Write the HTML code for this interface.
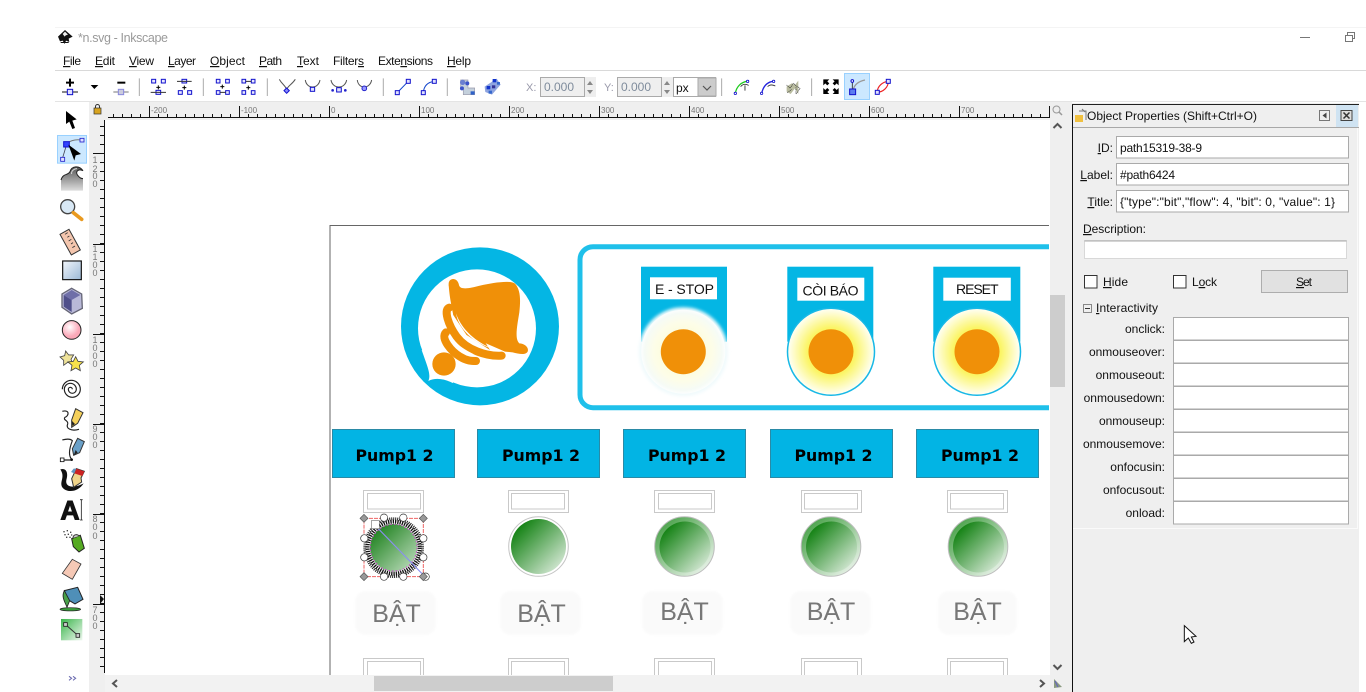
<!DOCTYPE html>
<html><head><meta charset="utf-8"><title>*n.svg - Inkscape</title>
<style>
html,body{margin:0;padding:0;background:#fff;width:1366px;height:692px;overflow:hidden}
svg{display:block;font-family:"Liberation Sans",sans-serif}
.t{font-size:12px;fill:#111}
.u{text-decoration:underline}
.rl{font-size:8px;fill:#777}
.rv{font-size:9px;fill:#777;text-anchor:middle}
.lab{font-size:12px;fill:#111;text-anchor:end}
.bat{font-size:25px;fill:#777;text-anchor:middle}
.pump{font-family:"DejaVu Sans",sans-serif;font-weight:bold;font-size:15.8px;fill:#000;text-anchor:middle}
.sq{fill:#dfe0ff;stroke:#11c;stroke-width:3}
.in{fill:#fff;stroke:#aaa;stroke-width:1}
</style></head><body>
<svg width="1366" height="692" viewBox="0 0 1366 692" xmlns="http://www.w3.org/2000/svg">
<defs>
<linearGradient id="gl" x1="0.1" y1="0.1" x2="0.9" y2="0.9"><stop offset="0" stop-color="#0a7d0a"/><stop offset="1" stop-color="#d5e8d5"/></linearGradient>
<linearGradient id="gr" x1="0.15" y1="0.1" x2="0.85" y2="0.9"><stop offset="0" stop-color="#4da34d"/><stop offset="1" stop-color="#e6f1e6"/></linearGradient>
<linearGradient id="gs" x1="0.1" y1="0.1" x2="0.9" y2="0.9"><stop offset="0" stop-color="#1c801c"/><stop offset="1" stop-color="#b5d8b5"/></linearGradient>
<radialGradient id="ye"><stop offset="0" stop-color="#f7ef30"/><stop offset=".55" stop-color="#fbf566"/><stop offset="1" stop-color="#fffff8"/></radialGradient>
<radialGradient id="es"><stop offset="0" stop-color="#fbfbc8"/><stop offset=".7" stop-color="#fdfde8"/><stop offset=".92" stop-color="#f6fbf6"/><stop offset="1" stop-color="#fcfefe"/></radialGradient>
<linearGradient id="wv" x1="0" y1="0" x2="0" y2="1"><stop offset="0" stop-color="#555"/><stop offset="1" stop-color="#ddd"/></linearGradient>
<linearGradient id="rc" x1="0" y1="0" x2="1" y2="1"><stop offset="0" stop-color="#f2f6fb"/><stop offset="1" stop-color="#9ab8d6"/></linearGradient>
<linearGradient id="gd" x1="0" y1="0" x2="1" y2="1"><stop offset="0" stop-color="#39b54a"/><stop offset="1" stop-color="#eef8ef"/></linearGradient>
<radialGradient id="ci" cx=".4" cy=".35"><stop offset="0" stop-color="#fff"/><stop offset="1" stop-color="#fba8b8"/></radialGradient>
<clipPath id="cv"><rect x="105" y="120" width="944" height="555"/></clipPath>
<clipPath id="hr"><rect x="108" y="102" width="942" height="18"/></clipPath>
<filter id="gb" x="-20%" y="-20%" width="140%" height="140%"><feGaussianBlur stdDeviation="1.5"/></filter>
<filter id="gb2" x="-20%" y="-20%" width="140%" height="140%"><feGaussianBlur stdDeviation="1"/></filter>
</defs>

<!-- window chrome -->
<rect x="55" y="27" width="1311" height="1" fill="#f4f4f4"/>
<g transform="translate(50,20) scale(.3333)">
<path d="M24,50 L45,30 L68,50 L56,56 L58,66 L48,62 L44,72 L38,62 L30,64 Z" fill="#111"/>
<path d="M38,42 L45,35 L54,44 L47,46 L44,50 Z" fill="#eee"/>
<rect x="32" y="66" width="24" height="3" fill="#111"/>
</g>
<text x="78" y="42" font-size="12.5" fill="#9a9a9a" textLength="90">*n.svg - Inkscape</text>
<rect x="1300" y="37" width="10" height="1" fill="#777"/>
<path d="M1345.500,35.500h7v6h-7zM1347.500,35v-2.500h7v6h-2" fill="none" stroke="#777"/>

<!-- menu -->
<g class="t">
<text class="t" x="63" y="65" textLength="18"><tspan class="u">F</tspan>ile</text>
<text class="t" x="95" y="65" textLength="20"><tspan class="u">E</tspan>dit</text>
<text class="t" x="129" y="65" textLength="25"><tspan class="u">V</tspan>iew</text>
<text class="t" x="168" y="65" textLength="28"><tspan class="u">L</tspan>ayer</text>
<text class="t" x="210" y="65" textLength="35"><tspan class="u">O</tspan>bject</text>
<text class="t" x="259" y="65" textLength="23"><tspan class="u">P</tspan>ath</text>
<text class="t" x="297" y="65" textLength="22"><tspan class="u">T</tspan>ext</text>
<text class="t" x="333" y="65" textLength="31">Filter<tspan class="u">s</tspan></text>
<text class="t" x="378" y="65" textLength="55">Exte<tspan class="u">n</tspan>sions</text>
<text class="t" x="447" y="65" textLength="24"><tspan class="u">H</tspan>elp</text>
</g>
<rect x="55" y="70" width="1311" height="1" fill="#d9d9d9"/>
<rect x="55" y="101" width="1311" height="1" fill="#e4e4e4"/>

<!-- toolbar part 1 -->
<g transform="translate(50,20) scale(.3333)" fill="none">
<path d="M60,176V200M48,188H72" stroke="#000" stroke-width="6"/>
<path d="M36,216H84" stroke="#111" stroke-width="3"/><rect class="sq" x="52" y="208" width="16" height="16"/>
<path d="M122,195H145L133,207Z" fill="#000"/>
<path d="M202,188H226" stroke="#000" stroke-width="6"/><path d="M190,216H236" stroke="#777" stroke-width="3"/>
<rect x="205" y="208" width="16" height="16" fill="#ccd" stroke="#88d" stroke-width="3"/>
<path d="M268,175V228M460,175V228M652,175V228M1000,175V228M1192,175V228" stroke="#aaa" stroke-width="3"/>
<g stroke="#11c" stroke-width="3" fill="#e8e8ff">
<rect x="305" y="178" width="12" height="11"/><rect x="334" y="178" width="12" height="11"/><rect x="318" y="211" width="14" height="12"/>
<rect x="396" y="178" width="14" height="11"/><rect x="385" y="212" width="12" height="11"/><rect x="413" y="212" width="12" height="11"/>
<rect x="499" y="178" width="11" height="11"/><rect x="527" y="178" width="11" height="11"/><rect x="499" y="212" width="11" height="11"/><rect x="527" y="212" width="11" height="11"/>
<rect x="576" y="178" width="11" height="11"/><rect x="604" y="178" width="11" height="11"/><rect x="576" y="212" width="11" height="11"/><rect x="604" y="212" width="11" height="11"/>
</g>
<path d="M302,217H348M381,184H425M510,217H527M587,184H604" stroke="#333" stroke-width="3"/>
<path d="M325,196V208M319,202H331M403,197V209M397,203H409M517,194V206M511,200H523M595,197V209M589,203H601" stroke="#000" stroke-width="3"/>
<path d="M688,178C698,195 708,198 710,210C712,198 725,195 736,178M766,180C770,208 805,208 810,180M843,180C848,208 885,208 890,180M922,180C925,208 960,208 965,180" stroke="#555" stroke-width="3"/>
<path d="M710,204L718,212L710,220L702,212Z" fill="#88f" stroke="#11c" stroke-width="3"/>
<rect class="sq" x="781" y="202" width="13" height="12"/>
<rect class="sq" x="860" y="203" width="14" height="13"/>
<circle cx="848" cy="211" r="4" fill="#22c"/><circle cx="886" cy="211" r="4" fill="#22c"/>
<circle cx="943" cy="205" r="7" fill="#99f" stroke="#22c" stroke-width="3"/>
<path d="M1042,218L1075,184M1120,218C1122,195 1135,186 1153,184" stroke="#14c" stroke-width="3"/>
<rect class="sq" x="1036" y="212" width="12" height="12"/><rect class="sq" x="1069" y="178" width="12" height="12"/>
<rect class="sq" x="1114" y="212" width="12" height="12"/><rect class="sq" x="1147" y="178" width="12" height="12"/>
<path d="M1232,180H1254V204H1274V224H1240V204H1232Z" fill="#c4d0dc" stroke="#99a" stroke-width="2"/>
<circle cx="1238" cy="187" r="8" fill="#6a7fd0"/><circle cx="1252" cy="190" r="6" fill="#3a52c8"/><circle cx="1236" cy="205" r="6" fill="#3a52c8"/><rect x="1262" y="214" width="12" height="10" fill="#2f62c8"/>
<path d="M1304,200L1340,176L1352,194L1326,224L1306,216Z" fill="#8fa5e0"/>
<rect x="1328" y="177" width="11" height="10" fill="#13c"/><rect x="1310" y="198" width="11" height="10" fill="#13c"/><rect x="1326" y="196" width="10" height="9" fill="#339"/><rect x="1316" y="212" width="10" height="9" fill="#36c"/><rect x="1341" y="186" width="9" height="8" fill="#36c"/>
</g>

<!-- toolbar part 2 -->
<text x="526" y="91" font-size="11" fill="#99a">X:</text>
<rect x="540.500" y="77.500" width="44" height="19" fill="#efefef" stroke="#aaa" stroke-width="1"/>
<text x="544" y="91" font-size="12" fill="#7f8c9c" textLength="30">0.000</text>
<rect x="585" y="77" width="11" height="20" fill="#eee"/><path d="M587,85l3,-4 3,4zM587,90l3,4 3,-4z" fill="#888"/>
<text x="604" y="91" font-size="11" fill="#99a">Y:</text>
<rect x="617.500" y="77.500" width="44" height="19" fill="#efefef" stroke="#aaa" stroke-width="1"/>
<text x="621" y="91" font-size="12" fill="#7f8c9c" textLength="30">0.000</text>
<rect x="662" y="77" width="11" height="20" fill="#eee"/><path d="M664,85l3,-4 3,4zM664,90l3,4 3,-4z" fill="#888"/>
<rect x="673.500" y="77.500" width="42" height="19" fill="#fff" stroke="#aaa"/>
<rect x="698" y="78" width="18" height="18" fill="#ccc" stroke="#aaa"/>
<path d="M703,86l4,4 4,-4" fill="none" stroke="#555" stroke-width="1.200"/>
<text x="676" y="92" font-size="12" fill="#111">px</text>
<rect x="844.500" y="73.500" width="25" height="26" fill="#cce8ff" stroke="#99d1ff"/>
<g transform="translate(500,20) scale(.3333)" fill="none">
<path d="M665,175V228M935,175V228" stroke="#aaa" stroke-width="3"/>
<path d="M706,220C710,198 725,186 742,184" stroke="#2c2" stroke-width="4"/>
<path d="M722,200C730,190 738,192 746,196M735,196V212" stroke="#222" stroke-width="2.500"/>
<circle cx="706" cy="220" r="3.500" fill="#fff" stroke="#11c" stroke-width="2.500"/><circle cx="743" cy="184" r="3.500" fill="#fff" stroke="#11c" stroke-width="2.500"/>
<path d="M785,220C790,198 803,186 820,184" stroke="#22d" stroke-width="4"/>
<path d="M803,200C810,192 818,194 826,198" stroke="#222" stroke-width="2.500"/>
<circle cx="785" cy="220" r="3.500" fill="#fff" stroke="#11c" stroke-width="2.500"/><circle cx="821" cy="184" r="3.500" fill="#fff" stroke="#11c" stroke-width="2.500"/>
<path d="M860,200L875,190L885,195L895,182V222L885,205L872,222L860,215Z" fill="#b9bc9f"/>
<path d="M860,195L870,205L880,190L892,200L900,205L888,222V200M862,218L875,208" stroke="#222" stroke-width="2" stroke-dasharray="3 2"/>
<path d="M970,178H988L982,184L988,190L982,196L976,190L970,196ZM1016,178V196L1010,190L1004,196L998,190L1004,184L998,178ZM970,222V204L976,210L982,204L988,210L982,216L988,222ZM1016,222H998L1004,216L998,210L1004,204L1010,210L1016,204Z" fill="#000"/>
<path d="M1060,210C1062,195 1075,184 1095,180" stroke="#999" stroke-width="4"/>
<path d="M1057,186V208" stroke="#222" stroke-width="2.500"/>
<circle cx="1057" cy="183" r="4" fill="#fff" stroke="#11c" stroke-width="3"/>
<rect x="1049" y="207" width="18" height="17" fill="#5b7cf0" stroke="#11c" stroke-width="3"/>
<path d="M1132,217C1132,198 1148,186 1165,184M1132,217C1150,216 1165,202 1165,184" stroke="#e22" stroke-width="3.500"/>
<rect class="sq" x="1126" y="211" width="12" height="12"/><rect class="sq" x="1159" y="178" width="12" height="12"/>
</g>

<!-- ruler backgrounds -->
<rect x="89" y="102" width="961" height="18" fill="#efefef"/>
<rect x="89" y="102" width="16" height="590" fill="#efefef"/>
<rect x="105" y="675" width="945" height="17" fill="#f2f2f2"/>
<rect x="1050" y="102" width="22" height="590" fill="#efefef"/>

<!-- canvas -->
<rect x="105" y="120" width="945" height="555" fill="#fff"/>

<!-- H ruler -->
<g clip-path="url(#hr)">
<rect x="108" y="117" width="942" height="1" fill="#111"/>
<line x1="104" x2="1050" y1="115.500" y2="115.500" stroke="#111" stroke-width="3" stroke-dasharray="1 8"/>
<line x1="104" x2="1050" y1="111" y2="111" stroke="#111" stroke-width="4" stroke-dasharray="1 89" stroke-dashoffset="-45"/>
<line x1="59" x2="1050" y1="111.500" y2="111.500" stroke="#111" stroke-width="11" stroke-dasharray="1 89"/>
<text class="rl" x="151" y="113">-200</text><text class="rl" x="241" y="113">-100</text><text class="rl" x="331" y="113">0</text>
<text class="rl" x="421" y="113">100</text><text class="rl" x="511" y="113">200</text><text class="rl" x="601" y="113">300</text>
<text class="rl" x="691" y="113">400</text><text class="rl" x="781" y="113">500</text><text class="rl" x="871" y="113">600</text><text class="rl" x="961" y="113">700</text>
</g>
<!-- V ruler -->
<rect x="104" y="120" width="1" height="553" fill="#111"/>
<line x1="102" x2="102" y1="126" y2="673" stroke="#111" stroke-width="4" stroke-dasharray="1 8"/>
<path d="M93,153.500H104M93,244.500H104M93,334.500H104M93,424.500H104M93,514.500H104M93,604.500H104" stroke="#111" fill="none"/>
<g class="rv">
<text class="rv" x="95" y="163">1</text><text class="rv" x="95" y="172">2</text><text class="rv" x="95" y="179">0</text><text class="rv" x="95" y="187">0</text>
<text class="rv" x="95" y="252">1</text><text class="rv" x="95" y="260">1</text><text class="rv" x="95" y="268">0</text><text class="rv" x="95" y="276">0</text>
<text class="rv" x="95" y="343">1</text><text class="rv" x="95" y="351">0</text><text class="rv" x="95" y="359">0</text><text class="rv" x="95" y="367">0</text>
<text class="rv" x="95" y="432">9</text><text class="rv" x="95" y="440">0</text><text class="rv" x="95" y="448">0</text>
<text class="rv" x="95" y="522">8</text><text class="rv" x="95" y="530">0</text><text class="rv" x="95" y="539">0</text>
<text class="rv" x="95" y="613">7</text><text class="rv" x="95" y="621">0</text><text class="rv" x="95" y="629">0</text>
</g>
<path d="M100,595L104,599L100,604Z" fill="#111"/>
<!-- lock -->
<rect x="94" y="108" width="7" height="6" fill="#d8a420" stroke="#333" stroke-width=".7"/>
<path d="M95.500,108v-1.500a2,2 0 0 1 4,0v1.500" fill="none" stroke="#333"/>

<!-- artwork -->
<g clip-path="url(#cv)">
<path d="M330,675V225.500H1050" fill="none" stroke="#666"/>
<g transform="translate(390,235) scale(.3333)">
<circle cx="270" cy="274" r="237" fill="#04b6e4"/>
<circle cx="261" cy="280" r="177" fill="#fff"/>
<path d="M95,345C112,395 124,418 115,438C135,428 160,430 188,444L240,400Z" fill="#fff"/>
<path d="M176,148C175,128 202,125 207,150C210,166 240,160 270,152C310,143 360,135 375,146C392,165 392,195 388,232C382,270 373,312 388,325C402,325 418,336 413,350C406,362 385,356 368,352L345,350L230,300L190,240Z" fill="#f09008"/>
<path d="M176,148C178,180 182,200 190,240L230,300L300,345Z" fill="#f09008"/>
<path d="M178,218C160,225 175,270 200,305C230,345 290,365 335,362" fill="none" stroke="#f09008" stroke-width="24" stroke-linecap="round"/>
<path d="M168,292C150,310 185,350 210,365C230,378 245,378 258,378" fill="none" stroke="#f09008" stroke-width="24" stroke-linecap="round"/>
<circle cx="162" cy="387" r="35" fill="#f09008"/>
<path d="M198,235C205,280 250,325 310,342C260,322 215,285 198,235Z" fill="#fff"/>
<path d="M188,318C200,340 225,355 252,358C225,345 205,330 188,318Z" fill="#fff"/>
</g>
<rect x="580" y="246.700" width="520" height="161" rx="13" fill="#fff" stroke="#1fc0ea" stroke-width="5"/>
<rect x="641" y="266.700" width="86" height="75" fill="#04b6e4"/>
<circle cx="683.300" cy="351.700" r="44.500" fill="#f0fafc" filter="url(#gb)"/>
<circle cx="683.300" cy="351.700" r="42" fill="url(#es)"/>
<circle cx="683.300" cy="351.700" r="22.500" fill="#f09008"/>
<rect x="650" y="277.300" width="67" height="22" fill="#fff"/>
<text x="655" y="294" font-size="14" fill="#111" textLength="59">E - STOP</text>
<rect x="787.300" y="266.700" width="86" height="75" fill="#04b6e4"/>
<circle cx="831" cy="351.700" r="43.500" fill="url(#ye)" stroke="#18b8e6" stroke-width="1.500"/>
<circle cx="831" cy="351.700" r="22.500" fill="#f09008"/>
<rect x="797.300" y="277.700" width="67" height="23" fill="#fff"/>
<text x="802.500" y="295.700" font-size="14" fill="#111" textLength="56">CÒI BÁO</text>
<rect x="933.300" y="266.700" width="87" height="75" fill="#04b6e4"/>
<circle cx="977" cy="351.700" r="43.500" fill="url(#ye)" stroke="#18b8e6" stroke-width="1.500"/>
<circle cx="977" cy="351.700" r="22.500" fill="#f09008"/>
<rect x="943.300" y="277.700" width="67.500" height="23" fill="#fff"/>
<text x="956" y="294" font-size="14" fill="#111" textLength="42.500">RESET</text>
<g fill="#02b4e4" stroke="#2a8aa6" stroke-width="1">
<rect x="332.500" y="429.500" width="122" height="48"/><rect x="477.500" y="429.500" width="122" height="48"/>
<rect x="623.500" y="429.500" width="122" height="48"/><rect x="770.500" y="429.500" width="122" height="48"/><rect x="916.500" y="429.500" width="122" height="48"/>
</g>
<text class="pump" x="394.500" y="461">Pump1 2</text><text class="pump" x="541" y="461">Pump1 2</text>
<text class="pump" x="687" y="461">Pump1 2</text><text class="pump" x="833.500" y="461">Pump1 2</text><text class="pump" x="980" y="461">Pump1 2</text>
<g fill="#fff" stroke="#c9c9c9" stroke-width="1">
<rect x="363.500" y="490.500" width="60" height="22"/><rect x="367.500" y="493.500" width="53" height="15.500"/>
<rect x="508.500" y="490.500" width="60" height="22"/><rect x="511.500" y="493.500" width="53" height="15.500"/>
<rect x="654.500" y="490.500" width="60" height="22"/><rect x="658.500" y="493.500" width="53" height="15.500"/>
<rect x="801.500" y="490.500" width="60" height="22"/><rect x="804.500" y="493.500" width="53" height="15.500"/>
<rect x="947.500" y="490.500" width="60" height="22"/><rect x="950.500" y="493.500" width="53" height="15.500"/>
</g>
<circle cx="538.500" cy="546.500" r="29.800" fill="#fff" stroke="#c4c4c4"/>
<circle cx="538.500" cy="546.500" r="27.500" fill="url(#gl)"/>
<circle cx="684.500" cy="546.500" r="29.800" fill="url(#gr)" stroke="#bdbdbd"/>
<circle cx="685" cy="547" r="25.500" fill="url(#gl)"/>
<circle cx="831" cy="546.500" r="29.800" fill="url(#gr)" stroke="#bdbdbd"/>
<circle cx="831.500" cy="547" r="25.500" fill="url(#gl)"/>
<circle cx="978" cy="546.500" r="29.800" fill="url(#gr)" stroke="#bdbdbd"/>
<circle cx="978.500" cy="547" r="25.500" fill="url(#gl)"/>
<g transform="translate(340,480) scale(.3333)">
<rect x="72" y="115" width="178" height="175" fill="none" stroke="#e66" stroke-width="3" stroke-dasharray="12 3"/>
<circle cx="161" cy="203" r="73" fill="url(#gs)"/>
<circle cx="161" cy="203" r="82" fill="none" stroke="#fff" stroke-width="22"/>
<circle cx="161" cy="203" r="78" fill="none" stroke="#111" stroke-width="12" stroke-dasharray="4 3"/>
<circle cx="161" cy="203" r="87" fill="none" stroke="#222" stroke-width="8" stroke-dasharray="3 3"/>
<circle cx="161" cy="203" r="70" fill="none" stroke="#d040d0" stroke-width="2.500" stroke-dasharray="5 6"/>
<path d="M115,146L250,285" stroke="#8a8ff0" stroke-width="3.500" fill="none"/>
<rect x="94" y="122" width="24" height="24" fill="#fff" stroke="#777" stroke-width="2"/>
<g fill="#fff" stroke="#333" stroke-width="2">
<circle cx="132" cy="113" r="11"/><circle cx="190" cy="113" r="11"/><circle cx="73" cy="175" r="11"/><circle cx="73" cy="232" r="11"/>
<circle cx="250" cy="175" r="11"/><circle cx="250" cy="232" r="11"/><circle cx="132" cy="290" r="11"/><circle cx="190" cy="290" r="11"/><circle cx="257" cy="290" r="11"/>
</g>
<g fill="#999" stroke="#555" stroke-width="2">
<path d="M72,103l12,12 -12,12 -12,-12z"/><path d="M250,103l12,12 -12,12 -12,-12z"/><path d="M72,278l12,12 -12,12 -12,-12z"/><path d="M250,278l12,12 -12,12 -12,-12z"/>
</g>
</g>
<g fill="#fafafa" filter="url(#gb2)">
<rect x="355" y="591" width="81" height="44" rx="11"/><rect x="500" y="591" width="81" height="44" rx="11"/>
<rect x="642" y="591" width="81" height="44" rx="11"/><rect x="790" y="591" width="81" height="44" rx="11"/><rect x="938" y="591" width="79" height="44" rx="11"/>
</g>
<text class="bat" x="396.500" y="622">BẬT</text><text class="bat" x="541.500" y="622">BẬT</text>
<text class="bat" x="684.500" y="620">BẬT</text><text class="bat" x="831" y="620">BẬT</text><text class="bat" x="977.500" y="620">BẬT</text>
<g fill="#fff" stroke="#c9c9c9" stroke-width="1">
<path d="M363.500,680V658.500H423.500V680"/><rect x="367.500" y="661.500" width="53" height="20"/>
<path d="M508.500,680V658.500H568.500V680"/><rect x="511.500" y="661.500" width="53" height="20"/>
<path d="M654.500,680V658.500H714.500V680"/><rect x="658.500" y="661.500" width="53" height="20"/>
<path d="M801.500,680V658.500H861.500V680"/><rect x="804.500" y="661.500" width="53" height="20"/>
<path d="M947.500,680V658.500H1007.500V680"/><rect x="950.500" y="661.500" width="53" height="20"/>
</g>
</g>

<!-- scrollbars -->
<rect x="1050" y="295" width="15" height="92" fill="#cdcdcd"/>
<rect x="374" y="676" width="239" height="15" fill="#cdcdcd"/>
<path d="M1053.500,128l4,-4 4,4M1053.500,665l4,4 4,-4" fill="none" stroke="#555" stroke-width="2"/>
<path d="M117,680l-4,3.500 4,3.500M1040,680l4,3.500 -4,3.500" fill="none" stroke="#555" stroke-width="2"/>
<circle cx="1056.500" cy="109.500" r="3.500" fill="#eee" stroke="#999"/><path d="M1059,112l3,3" stroke="#999" stroke-width="1.500"/>
<path d="M1054,679L1062,687L1054,688Z" fill="#8a9a80"/><path d="M1055,681l3,6" stroke="#66b" stroke-width="1.200"/>

<!-- toolbox -->
<g transform="translate(55,100) scale(.3333)">
<path d="M33,33V72L43,65L52,87L60,84L52,62L65,58Z" fill="#000"/>
<rect x="7.500" y="106.500" width="87" height="83" fill="#cce8ff" stroke="#99d1ff" stroke-width="3"/>
<path d="M35,130C50,120 65,118 78,120" fill="none" stroke="#777" stroke-width="3"/>
<path d="M23,173L33,140" stroke="#445" stroke-width="2.500"/>
<rect x="26" y="125" width="17" height="16" fill="#34f" stroke="#11c" stroke-width="3"/>
<rect x="75" y="115" width="12" height="11" fill="#dfe0ff" stroke="#22c" stroke-width="2.500"/>
<rect x="17" y="172" width="12" height="12" fill="#dfe0ff" stroke="#22c" stroke-width="2.500"/>
<path d="M40,134L78,162L62,166L58,182Z" fill="#000"/>
<path d="M18,272V240C25,218 38,228 45,215C50,198 72,195 84,212C70,205 60,215 68,226C74,234 80,236 84,236V272Z" fill="url(#wv)"/>
<path d="M18,240C25,218 38,228 45,215C50,198 72,195 84,212C70,205 60,215 68,226C74,234 80,236 84,236" fill="none" stroke="#222" stroke-width="3"/>
<path d="M50,222C48,212 58,206 66,206" fill="none" stroke="#ddd" stroke-width="3"/>
<circle cx="38" cy="320" r="21" fill="#d8e8f5" stroke="#444" stroke-width="4"/>
<path d="M55,338L80,358" stroke="#e99a20" stroke-width="11" stroke-linecap="round"/>
<path d="M15,403L42,388L76,450L49,465Z" fill="#f4c6ae" stroke="#333" stroke-width="3"/>
<path d="M38,398l-8,5M43,408l-6,4M49,418l-8,5M54,428l-6,4M60,438l-8,5" stroke="#333" stroke-width="2.500"/>
<rect x="23" y="483" width="56" height="56" fill="url(#rc)" stroke="#111" stroke-width="3.500"/>
<path d="M50,565L80,582L82,625L50,642L21,622V582Z" fill="#b9b9d8" stroke="#667" stroke-width="4"/>
<path d="M26,585L50,570L76,585L50,600Z" fill="#6f6fa8"/><path d="M26,585L50,600V636L26,620Z" fill="#4f4f8a"/>
<circle cx="50" cy="690" r="28" fill="url(#ci)" stroke="#222" stroke-width="3"/>
<path d="M32,753L41,765L56,765L48,778L54,792L38,787L26,796L26,781L15,771L29,767Z" fill="#efe39a" stroke="#444" stroke-width="2.500"/>
<path d="M62,770L69,784L85,786L73,796L76,812L62,804L48,812L51,796L39,786L55,784Z" fill="#f7e24a" stroke="#444" stroke-width="2.500"/>
<path d="M52,868A6,6 0 0 0 40,868A12,12 0 0 0 64,868A18,18 0 0 0 28,868A24,24 0 0 0 76,868A27,27 0 0 0 22,868" fill="none" stroke="#222" stroke-width="3.500"/>
</g>
<g transform="translate(55,400) scale(.3333)">
<path d="M22,34C45,28 42,48 30,52C22,60 42,62 38,72C32,85 48,95 72,88" fill="none" stroke="#222" stroke-width="3.500"/>
<path d="M62,26L84,38L68,70L50,82L50,60Z" fill="#f5d05a" stroke="#333" stroke-width="3"/>
<path d="M52,78L60,72L50,62Z" fill="#222"/>
<path d="M22,120C40,115 48,118 52,122C45,140 38,165 50,178M20,180H50" fill="none" stroke="#222" stroke-width="3.500"/>
<rect x="16" y="174" width="11" height="11" fill="#fff" stroke="#111" stroke-width="2.500"/><circle cx="50" cy="179" r="4" fill="#111"/>
<path d="M68,115L88,125L74,158L56,166L52,146Z" fill="#6aa0c8" stroke="#333" stroke-width="3"/>
<path d="M56,166L62,150L68,158Z" fill="#222"/>
<path d="M16,208C36,202 40,222 34,240C30,262 55,266 86,250C70,276 36,280 22,262C12,245 32,232 16,208Z" fill="#111"/>
<path d="M64,206L88,214L78,234L80,246L56,262L50,236Z" fill="#f0d48a" stroke="#333" stroke-width="3"/>
<path d="M64,206L88,214L82,228L58,220Z" fill="#c22"/>
<path d="M56,206L64,206L58,220L48,216Z" fill="#5f95c0"/>
<text x="16" y="358" font-family="Liberation Sans, sans-serif" font-weight="bold" font-size="80" fill="#111" stroke="#111" stroke-width="3">A</text>
<path d="M75,299H83M79,299V360M75,360H83" stroke="#222" stroke-width="2.500" fill="none"/>
<path d="M25,395h4M35,392h4M45,397h4M28,404h4M38,403h4M48,405h4M33,412h4M43,412h4" stroke="#444" stroke-width="4"/>
<path d="M50,416L76,406L88,445L72,456L55,440Z" fill="#55aa22" stroke="#222" stroke-width="3"/><path d="M54,414a10,10 0 0 1 18,-6" fill="#ccc" stroke="#333" stroke-width="3"/>
<path d="M52,478L78,492L52,538L22,520Z" fill="#f6c9b6" stroke="#333" stroke-width="2.500"/>
<path d="M28,572L68,562L84,598L60,612L40,600Z" fill="#4f8fb8" stroke="#222" stroke-width="3"/>
<path d="M28,572C18,590 30,606 36,622L44,602Z" fill="#48a048" stroke="#222" stroke-width="2.500"/>
<ellipse cx="46" cy="628" rx="31" ry="5" fill="#3a9a3a" stroke="#222" stroke-width="2"/>
<rect x="18" y="657" width="64" height="64" fill="url(#gd)"/>
<path d="M32,674L68,706" stroke="#333" stroke-width="3"/>
<rect x="26" y="668" width="11" height="11" fill="#ccc" stroke="#222" stroke-width="2.500"/><rect x="63" y="701" width="11" height="11" fill="#ccc" stroke="#222" stroke-width="2.500"/>
<path d="M42,829l8,6 -8,6M54,829l8,6 -8,6" fill="none" stroke="#6a6ab0" stroke-width="3"/>
</g>

<!-- panel -->
<rect x="1072" y="103" width="287" height="589" fill="#efefef"/>
<rect x="1072" y="104" width="1" height="588" fill="#111"/>
<rect x="1072" y="104" width="287" height="1" fill="#222"/>
<rect x="1073" y="127" width="286" height="1" fill="#a8a8a8"/>
<rect x="1073" y="528" width="284" height="1" fill="#fafafa"/>
<rect x="1357" y="128" width="1" height="401" fill="#fafafa"/>
<rect x="1336" y="105" width="22" height="22" fill="#cfe3f2"/>
<rect x="1341" y="110.500" width="11" height="10" fill="#ddd" stroke="#444"/><path d="M1343.500,112.500l6,6m0,-6l-6,6" stroke="#333" stroke-width="1.500"/>
<rect x="1319.500" y="110.500" width="10" height="10" fill="#eee" stroke="#777"/><path d="M1326.500,112.500l-4,3 4,3z" fill="#444"/>
<rect x="1075" y="115" width="8" height="7" fill="#f0c040"/><path d="M1079,111h7v9M1082,109l3,3" fill="none" stroke="#777"/>
<text class="t" x="1087" y="120" textLength="170">Object Properties (Shift+Ctrl+O)</text>

<g>
<rect class="in" x="1116.500" y="136.500" width="232" height="21.500"/>
<rect class="in" x="1116.500" y="163.500" width="232" height="21.500"/>
<rect class="in" x="1116.500" y="190.500" width="232" height="21.500"/>
</g>
<text class="lab" x="1113" y="152"><tspan class="u">I</tspan>D:</text>
<text class="lab" x="1113" y="179"><tspan class="u">L</tspan>abel:</text>
<text class="lab" x="1113" y="206"><tspan class="u">T</tspan>itle:</text>
<text class="t" x="1120" y="152" textLength="82">path15319-38-9</text>
<text class="t" x="1120" y="179" textLength="55">#path6424</text>
<text class="t" x="1120" y="206" textLength="215">{"type":"bit","flow": 4, "bit": 0, "value": 1}</text>
<text class="t" x="1083" y="233" textLength="63"><tspan class="u">D</tspan>escription:</text>
<rect x="1084.500" y="240.500" width="262" height="18" fill="#fff" stroke="#d8d8d8"/>
<rect x="1084.500" y="240.500" width="262" height="1" fill="#aaa"/>
<rect x="1084.500" y="275.500" width="12.500" height="12.500" fill="#fff" stroke="#333"/>
<text class="t" x="1103" y="286" textLength="25"><tspan class="u">H</tspan>ide</text>
<rect x="1173.500" y="275.500" width="12.500" height="12.500" fill="#fff" stroke="#333"/>
<text class="t" x="1192" y="286" textLength="25">L<tspan class="u">o</tspan>ck</text>
<rect x="1261.500" y="270.500" width="86" height="22" fill="#e1e1e1" stroke="#adadad"/>
<text class="t" x="1296" y="286" textLength="16"><tspan class="u">S</tspan>et</text>
<rect x="1083.500" y="304.500" width="8" height="8" fill="#efefef" stroke="#888"/><rect x="1085" y="308" width="5" height="1" fill="#333"/>
<text class="t" x="1096" y="312" textLength="62"><tspan class="u">I</tspan>nteractivity</text>

<g>
<rect class="in" x="1173.500" y="317.500" width="175" height="22.500"/>
<rect class="in" x="1173.500" y="340.500" width="175" height="22.500"/>
<rect class="in" x="1173.500" y="363.500" width="175" height="22.500"/>
<rect class="in" x="1173.500" y="386.500" width="175" height="22.500"/>
<rect class="in" x="1173.500" y="409.500" width="175" height="22.500"/>
<rect class="in" x="1173.500" y="432.500" width="175" height="22.500"/>
<rect class="in" x="1173.500" y="455.500" width="175" height="22.500"/>
<rect class="in" x="1173.500" y="478.500" width="175" height="22.500"/>
<rect class="in" x="1173.500" y="501.500" width="175" height="22.500"/>
</g>
<text class="lab" x="1165" y="333">onclick:</text>
<text class="lab" x="1165" y="356">onmouseover:</text>
<text class="lab" x="1165" y="379">onmouseout:</text>
<text class="lab" x="1165" y="402">onmousedown:</text>
<text class="lab" x="1165" y="425">onmouseup:</text>
<text class="lab" x="1165" y="448">onmousemove:</text>
<text class="lab" x="1165" y="471">onfocusin:</text>
<text class="lab" x="1165" y="494">onfocusout:</text>
<text class="lab" x="1165" y="517">onload:</text>

<!-- cursor -->
<g transform="translate(1150,500) scale(.3333)">
<path d="M103,377V425L115,414L124,430L132,426L124,411L138,409Z" fill="#fff" stroke="#111" stroke-width="3"/>
</g>
</svg>
</body></html>
